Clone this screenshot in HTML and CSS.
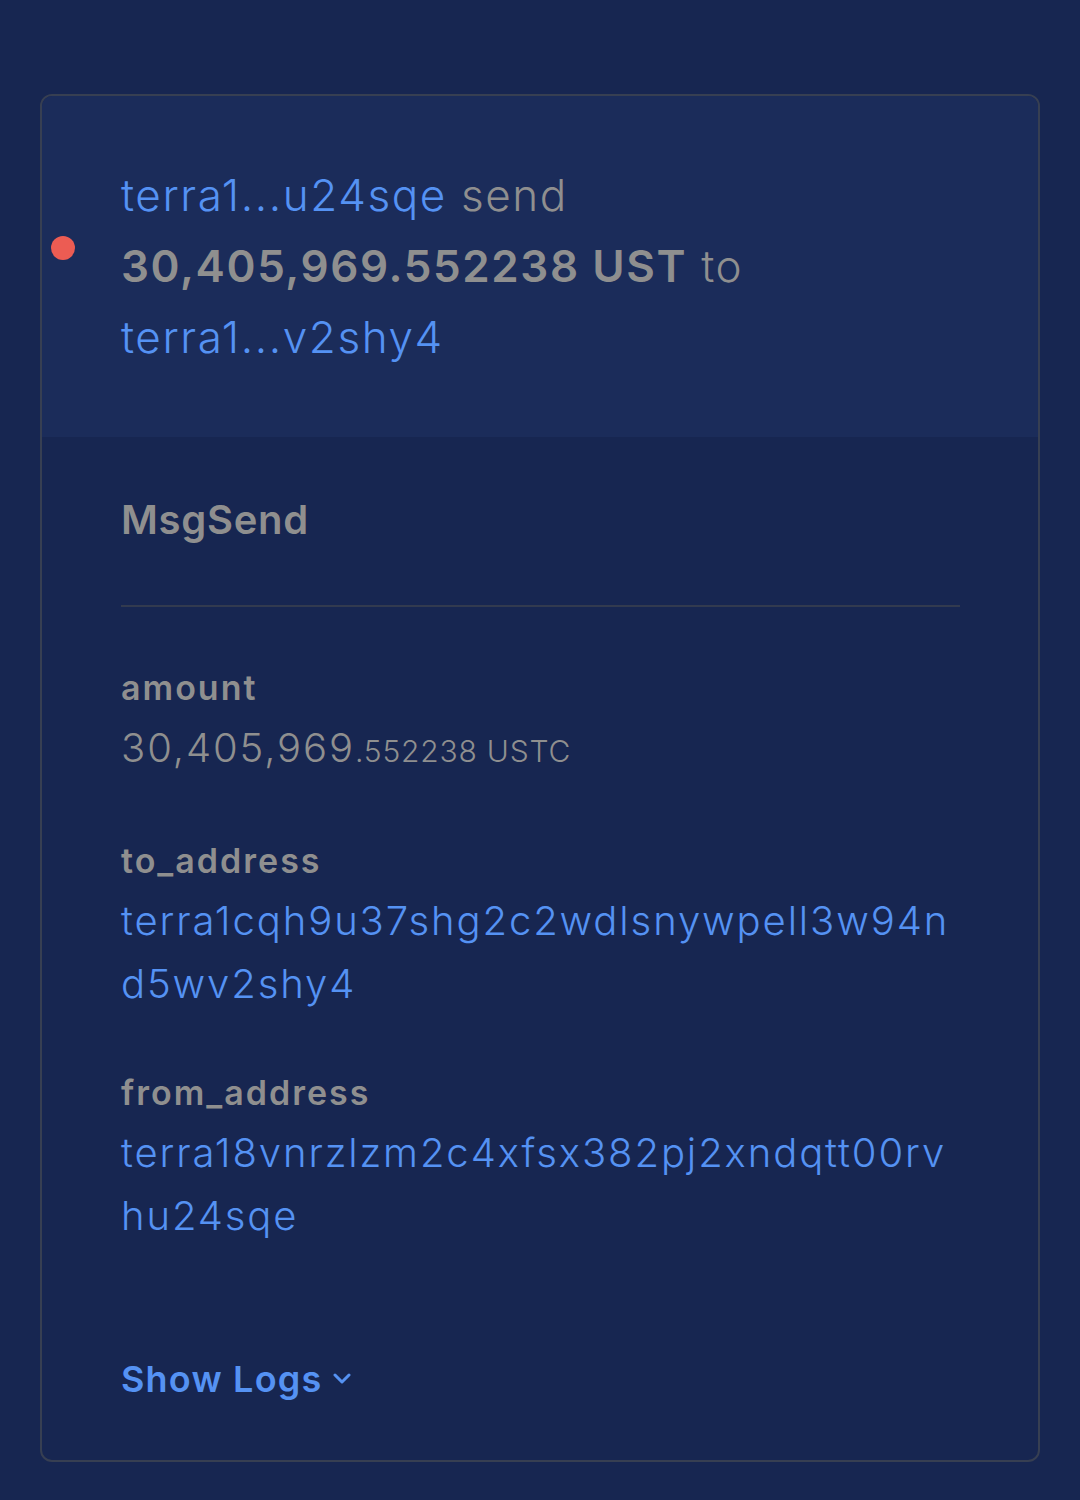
FILE: index.html
```html
<!DOCTYPE html>
<html lang="en">
<head>
    <meta charset="UTF-8">
    <meta name="viewport" content="width=device-width, initial-scale=1.0">
    <title>MsgSend</title>
    <link rel="stylesheet" href="styles.css">
</head>
<body>
    <div class="card">
        <div class="card-head">
            <span class="dot"></span>
            <p class="summary">
                <a class="addr" href="#">terra1...u24sqe</a> send
                <strong>30,405,969.552238 UST</strong> to
                <a class="addr" href="#">terra1...v2shy4</a>
            </p>
        </div>

        <div class="card-body">
            <h2 class="msg-type">MsgSend</h2>

            <div class="field">
                <div class="field-label">amount</div>
                <div class="field-value">30,405,969<small>.552238 USTC</small></div>
            </div>
            <div class="field">
                <div class="field-label">to_address</div>
                <a class="field-value link" href="#">terra1cqh9u37shg2c2wdlsnywpell3w94nd5wv2shy4</a>
            </div>
            <div class="field">
                <div class="field-label">from_address</div>
                <a class="field-value link" href="#">terra18vnrzlzm2c4xfsx382pj2xndqtt00rvhu24sqe</a>
            </div>

            <button class="show-logs">Show Logs
                <svg width="18" height="12" viewBox="0 0 18 12"><path d="M2 2l7 7 7-7" fill="none" stroke="currentColor" stroke-width="3" stroke-linecap="round" stroke-linejoin="round"/></svg>
            </button>
        </div>
    </div>
</body>
</html>
```

FILE: styles.css
```css
body {
    margin: 0;
    padding: 94px 40px 40px;
    background-color: #172651;
    font-family: Inter, "Open Sans", sans-serif;
    color: #8f8f8f;
}
a {
    color: #5592f3;
    text-decoration: none;
}
.card {
    border: 2px solid #373f52;
    border-radius: 12px;
    overflow: hidden;
}
.card-head {
    position: relative;
    background-color: #1b2c5a;
    padding: 64px 80px 64px 79px;
}
.dot {
    position: absolute;
    left: 9px;
    top: 140px;
    width: 24px;
    height: 24px;
    border-radius: 50%;
    background-color: #ec5c53;
}
.summary {
    margin: 0;
    font-size: 44px;
    line-height: 71px;
    font-weight: 300;
    letter-spacing: 1.6px;
    max-width: 680px;
}
.summary strong {
    font-weight: 600;
}
.card-body {
    padding: 58px 78px 57px 79px;
}
.msg-type {
    margin: 0;
    font-size: 40px;
    line-height: 50px;
    font-weight: 600;
    letter-spacing: 0.7px;
    padding-bottom: 60px;
    border-bottom: 2px solid #323a4f;
}
.field {
    margin-top: 54px;
}
.field:first-of-type {
    margin-top: 57px;
}
.field-label {
    font-size: 34px;
    line-height: 48px;
    font-weight: 600;
    letter-spacing: 2px;
}
.field-value {
    display: block;
    margin-top: 4px;
    font-size: 40px;
    line-height: 63px;
    font-weight: 300;
    letter-spacing: 1.9px;
    word-break: break-all;
}
.field-value small {
    font-size: 30px;
    letter-spacing: 0.8px;
}
.show-logs {
    margin-top: 108px;
    padding: 0;
    border: none;
    background: none;
    color: #5592f3;
    font-family: inherit;
    font-size: 36px;
    line-height: 48px;
    font-weight: 600;
    letter-spacing: 1.2px;
    display: flex;
    align-items: center;
    gap: 10px;
    cursor: pointer;
}
```
